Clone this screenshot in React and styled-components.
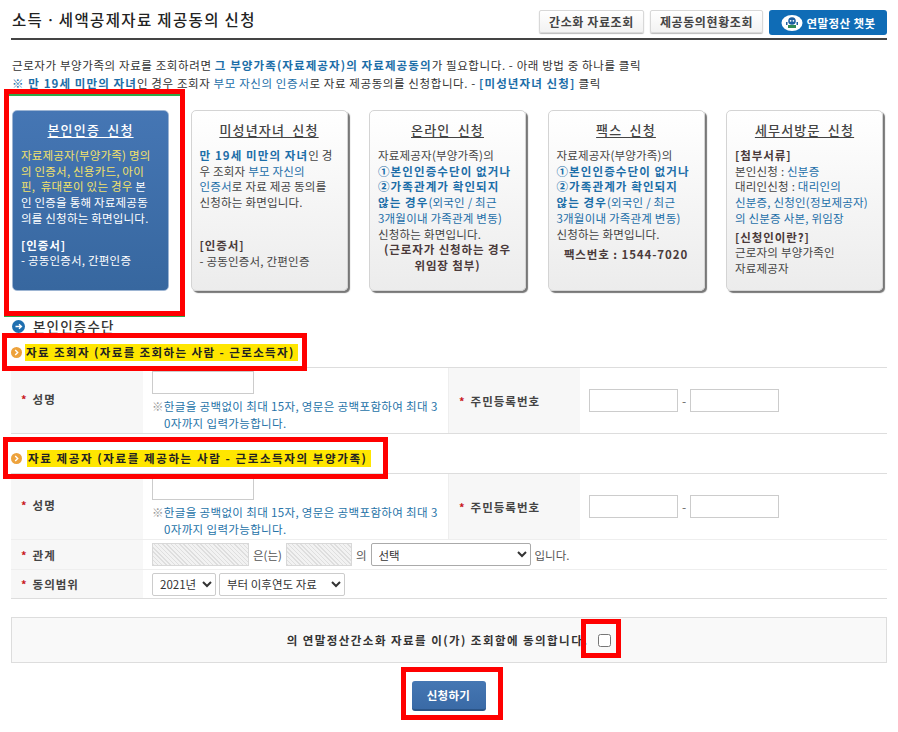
import React from "react";
import styled, { createGlobalStyle } from "styled-components";

const GlobalStyle = createGlobalStyle`
  html, body {
    margin: 0;
    padding: 0;
    background: #fff;
  }
  body {
    font-family: "Noto Sans CJK KR", "Liberation Sans", sans-serif;
    font-size: 12px;
    color: #333;
  }
  * { box-sizing: border-box; }
`;

const Page = styled.div`
  position: relative;
  width: 898px;
  height: 732px;
  padding: 10px 11px 0 11px;
  overflow: hidden;
`;

const Header = styled.div`
  display: flex;
  justify-content: space-between;
  align-items: flex-start;
  height: 30px;
  border-bottom: 2px solid #444;
`;

const Title = styled.h1`
  margin: 0;
  padding: 0 0 0 1px;
  font-size: 15.5px;
  line-height: 18px;
  font-weight: 500;
  letter-spacing: 1.35px;
  color: #222;
`;

const HeaderButtons = styled.div`
  display: flex;
  gap: 6px;
`;

const GrayButton = styled.button`
  height: 23px;
  width: ${(p) => p.$w}px;
  padding: 0;
  border: 1px solid #d8d8d8;
  border-radius: 2px;
  background: linear-gradient(#fff, #f2f2f2);
  box-shadow: 0 1px 1px #bbb;
  font: 700 12px "Noto Sans CJK KR", sans-serif;
  letter-spacing: 0.6px;
  color: #444;
`;

const BotButton = styled.button`
  display: flex;
  align-items: center;
  justify-content: center;
  gap: 4px;
  width: 118px;
  height: 25px;
  padding: 0;
  border: 0;
  border-radius: 3px;
  background: #0f6cb6;
  font: 700 11.5px "Noto Sans CJK KR", sans-serif;
  letter-spacing: 0.4px;
  color: #fff;
`;

const Intro = styled.div`
  margin-top: 16px;
  padding-left: 1px;
  font-size: 11.5px;
  line-height: 18px;
  height: 36px;
  letter-spacing: 0.6px;
  white-space: nowrap;
  color: #333;
`;

const Blue = styled.span`
  color: #1c6ea8;
  font-weight: ${(p) => (p.$bold ? 700 : 400)};
  letter-spacing: ${(p) => (p.$bold ? "1.1px" : "inherit")};
`;

const Cards = styled.div`
  display: flex;
  gap: 21.5px;
  margin-top: 18px;
  padding-left: 1px;
`;

const Card = styled.div`
  width: 157px;
  height: 181px;
  padding: 11px 8px 0 8px;
  border: 1px solid ${(p) => (p.$active ? "#9db5d3" : "#d4d4d4")};
  border-radius: 5px;
  background: ${(p) =>
    p.$active
      ? "linear-gradient(#4576b4, #37679f)"
      : "linear-gradient(#fff, #ececec)"};
  box-shadow: ${(p) => (p.$active ? "none" : "2px 2px 1px #777")};
  font-size: 11.5px;
  line-height: 15.7px;
  letter-spacing: 0.2px;
  white-space: nowrap;
  color: ${(p) => (p.$active ? "#fff" : "#444")};
`;

const CardTitle = styled.div`
  margin-bottom: 10px;
  text-align: center;
  font-size: 13px;
  line-height: 16px;
  font-weight: 500;
  letter-spacing: 1.2px;
  word-spacing: 3px;
  text-decoration: underline;
  text-underline-offset: 2px;
  color: ${(p) => (p.$active ? "#fff" : "#444")};
`;

const Yellow = styled.span`
  color: #f3e26a;
`;

const Strong = styled.div`
  margin-top: ${(p) => p.$top || 0}px;
  font-weight: 700;
  letter-spacing: 0.9px;
  text-align: ${(p) => (p.$center ? "center" : "left")};
  color: ${(p) => (p.$active ? "#fff" : "#4a3a3a")};
`;

const SectionHead = styled.div`
  display: flex;
  align-items: center;
  gap: 8px;
  height: 16px;
  margin-top: 27px;
  padding-left: 1px;
  font-size: 13.5px;
  font-weight: 500;
  letter-spacing: 1.2px;
  color: #333;
`;

const SubHead = styled.div`
  display: flex;
  align-items: center;
  gap: ${(p) => p.$gap}px;
  height: 18px;
  margin-top: ${(p) => p.$top}px;
  margin-bottom: ${(p) => p.$bottom}px;
`;

const Marker = styled.span`
  padding: 0 3px 0 1px;
  background: #ffe600;
  font-size: 11.5px;
  line-height: 17px;
  font-weight: 700;
  letter-spacing: ${(p) => p.$ls}px;
  color: #222;
`;

const Table = styled.div`
  display: grid;
  grid-template-columns: 132px 306px 131px 1fr;
  width: 876px;
  border-top: 1px solid #ddd;
  border-bottom: 1px solid #ddd;
`;

const Label = styled.div`
  display: flex;
  align-items: center;
  gap: 5px;
  height: ${(p) => p.$h}px;
  padding-left: 10px;
  padding-bottom: ${(p) => p.$pb || 0}px;
  background: #f7f7f7;
  border-top: ${(p) => (p.$line ? "1px solid #eee" : "0")};
  font-size: 11.5px;
  font-weight: 700;
  color: #444;
  letter-spacing: 1px;
`;

const Star = styled.span`
  color: #c8161d;
  font-size: 11px;
`;

const NameCell = styled.div`
  padding: 3px 0 0 9px;
  border-right: 1px solid #eee;
`;

const SmallInput = styled.input`
  display: block;
  width: ${(p) => p.$w}px;
  height: 23px;
  padding: 0;
  border: 1px solid #ccc;
  background: #fff;
`;

const Hint = styled.div`
  margin-top: 4px;
  padding-left: 12px;
  width: 292px;
  text-indent: -12px;
  font-size: 11.5px;
  line-height: 16.5px;
  letter-spacing: 0.35px;
  word-break: break-all;
  color: #2673a8;
`;

const Gray = styled.span`
  color: #999;
`;

const IdCell = styled.div`
  display: flex;
  align-items: center;
  gap: 4px;
  padding: 0 0 0 9px;
  color: #666;
`;

const WideCell = styled.div`
  grid-column: span 3;
  display: flex;
  align-items: center;
  gap: ${(p) => p.$gap || 4}px;
  padding-left: 9px;
  border-top: 1px solid #eee;
  font-size: 11.5px;
  color: #555;
`;

const Hatch = styled.div`
  width: ${(p) => p.$w}px;
  height: 23px;
  border: 1px solid #d8d8d8;
  background: repeating-linear-gradient(45deg, #dedede 0 1px, #f2f2f2 1px 3px);
`;

const Select = styled.select`
  width: ${(p) => p.$w}px;
  height: 23px;
  padding: 0 0 0 3px;
  border: 1px solid ${(p) => (p.$dark ? "#aaa" : "#ccc")};
  border-radius: 2px;
  background: #fff;
  font: 11.5px "Noto Sans CJK KR", sans-serif;
  color: #333;
`;

const Consent = styled.div`
  display: flex;
  align-items: center;
  justify-content: center;
  gap: 10px;
  width: 876px;
  height: 46px;
  margin-top: 18px;
  border: 1px solid #ddd;
  background: #f9f9f9;
  font-size: 11.5px;
  font-weight: 700;
  letter-spacing: 1.45px;
  color: #333;
`;

const Check = styled.input`
  width: 13px;
  height: 13px;
  margin: 0;
`;

const Actions = styled.div`
  display: flex;
  justify-content: center;
  margin-top: 18px;
  padding-right: 1px;
`;

const Submit = styled.button`
  width: 74px;
  height: 30px;
  padding: 0;
  border: 0;
  border-bottom: 2px solid #2b5486;
  border-radius: 3px;
  background: linear-gradient(#4577b3, #3a6aa6);
  font: 700 11.5px "Noto Sans CJK KR", sans-serif;
  letter-spacing: 0.3px;
  color: #fff;
`;

// 스크린샷 위에 덧그린 표시
const RedBox = styled.div`
  position: absolute;
  left: ${(p) => p.$x}px;
  top: ${(p) => p.$y}px;
  width: ${(p) => p.$w}px;
  height: ${(p) => p.$h}px;
  border: 5px solid #f00;
  pointer-events: none;
`;

const GreenLine = styled.div`
  position: absolute;
  left: ${(p) => p.$x}px;
  top: ${(p) => p.$y}px;
  width: ${(p) => p.$w}px;
  height: ${(p) => p.$h}px;
  background: #2eaa4a;
`;

const BlueBullet = () => (
  <svg width="13" height="13" viewBox="0 0 13 13">
    <circle cx="6.5" cy="6.5" r="6.5" fill="#1f6fb0" />
    <path d="M3.5 6.5h6M7 4.2l2.5 2.3L7 8.8" fill="none" stroke="#fff" strokeWidth="1.3" />
  </svg>
);

const OrangeBullet = () => (
  <svg width="11" height="11" viewBox="0 0 11 11">
    <circle cx="5.5" cy="5.5" r="5.5" fill="#eda23c" />
    <path d="M4.2 3l2.5 2.5L4.2 8" fill="none" stroke="#fff" strokeWidth="1.4" />
  </svg>
);

const BotIcon = () => (
  <svg width="22" height="18" viewBox="0 0 22 18">
    <ellipse cx="11" cy="9" rx="10.5" ry="8" fill="#fff" />
    <circle cx="11" cy="7" r="3.8" fill="#1c5fa0" />
    <path d="M7 11h8v3H7z" fill="#2f8a55" />
    <circle cx="9.6" cy="6.8" r="0.9" fill="#fff" />
    <circle cx="12.4" cy="6.8" r="0.9" fill="#fff" />
    <path d="M5 8h1.5v3H5zM15.5 8H17v3h-1.5z" fill="#1c5fa0" />
  </svg>
);

const NameHint = () => (
  <Hint>
    <Gray>※</Gray>한글을 공백없이 최대 15자, 영문은 공백포함하여 최대 30자까지 입력가능합니다.
  </Hint>
);

const IdInputs = () => (
  <IdCell>
    <SmallInput $w={89} />-<SmallInput $w={89} />
  </IdCell>
);

const Req = ({ children, h, pb, line }) => (
  <Label $h={h} $pb={pb} $line={line}>
    <Star>*</Star>
    {children}
  </Label>
);

const App = () => {
  return (
    <Page>
      <GlobalStyle />
      <Header>
        <Title>소득ㆍ세액공제자료 제공동의 신청</Title>
        <HeaderButtons>
          <GrayButton $w={105}>간소화 자료조회</GrayButton>
          <GrayButton $w={113}>제공동의현황조회</GrayButton>
          <BotButton>
            <BotIcon />
            연말정산 챗봇
          </BotButton>
        </HeaderButtons>
      </Header>

      <Intro>
        근로자가 부양가족의 자료를 조회하려면 <Blue $bold>그 부양가족(자료제공자)의 자료제공동의</Blue>가 필요합니다. - 아래 방법 중 하나를 클릭
        <br />
        <Blue $bold>※ 만 19세 미만의 자녀</Blue>인 경우 조회자 <Blue>부모 자신의 인증서</Blue>로 자료 제공동의를 신청합니다. - <Blue $bold>[미성년자녀 신청]</Blue> 클릭
      </Intro>

      <Cards>
        <Card $active>
          <CardTitle $active>본인인증 신청</CardTitle>
          <Yellow>
            자료제공자(부양가족) 명의
            <br />의 인증서, 신용카드, 아이
            <br />핀, &nbsp;휴대폰이 있는 경우
          </Yellow>{" "}
          본
          <br />인 인증을 통해 자료제공동
          <br />의를 신청하는 화면입니다.
          <Strong $active $top={11}>[인증서]</Strong>
          - 공동인증서, 간편인증
        </Card>
        <Card>
          <CardTitle>미성년자녀 신청</CardTitle>
          <Blue $bold>만 19세 미만의 자녀</Blue>인 경
          <br />우 조회자 <Blue>부모 자신의</Blue>
          <br /><Blue>인증서</Blue>로 자료 제공 동의를
          <br />신청하는 화면입니다.
          <Strong $top={27}>[인증서]</Strong>
          - 공동인증서, 간편인증
        </Card>
        <Card>
          <CardTitle>온라인 신청</CardTitle>
          자료제공자(부양가족)의
          <br /><Blue $bold>①본인인증수단이 없거나</Blue>
          <br /><Blue $bold>②가족관계가 확인되지</Blue>
          <br /><Blue $bold>않는 경우</Blue><Blue>(외국인 / 최근</Blue>
          <br /><Blue>3개월이내 가족관계 변동)</Blue>
          <br />신청하는 화면입니다.
          <Strong $center>(근로자가 신청하는 경우<br />위임장 첨부)</Strong>
        </Card>
        <Card>
          <CardTitle>팩스 신청</CardTitle>
          자료제공자(부양가족)의
          <br /><Blue $bold>①본인인증수단이 없거나</Blue>
          <br /><Blue $bold>②가족관계가 확인되지</Blue>
          <br /><Blue $bold>않는 경우</Blue><Blue>(외국인 / 최근</Blue>
          <br /><Blue>3개월이내 가족관계 변동)</Blue>
          <br />신청하는 화면입니다.
          <Strong $center $top={5}>팩스번호 : 1544-7020</Strong>
        </Card>
        <Card>
          <CardTitle>세무서방문 신청</CardTitle>
          <Strong>[첨부서류]</Strong>
          본인신청 : <Blue>신분증</Blue>
          <br />대리인신청 : <Blue>대리인의</Blue>
          <br /><Blue>신분증, 신청인(정보제공자)</Blue>
          <br /><Blue>의 신분증 사본, 위임장</Blue>
          <Strong $top={3}>[신청인이란?]</Strong>
          근로자의 부양가족인
          <br />자료제공자
        </Card>
      </Cards>

      <SectionHead>
        <BlueBullet />
        본인인증수단
      </SectionHead>

      <SubHead $gap={3} $top={9} $bottom={6}>
        <OrangeBullet />
        <Marker $ls={1.4}>자료 조회자 (자료를 조회하는 사람 - 근로소득자)</Marker>
      </SubHead>
      <Table>
        <Req h={65} pb={4}>성명</Req>
        <NameCell>
          <SmallInput $w={102} />
          <NameHint />
        </NameCell>
        <Req h={65}>주민등록번호</Req>
        <IdInputs />
      </Table>

      <SubHead $gap={5} $top={15} $bottom={6}>
        <OrangeBullet />
        <Marker $ls={1.6}>자료 제공자 (자료를 제공하는 사람 - 근로소득자의 부양가족)</Marker>
      </SubHead>
      <Table>
        <Req h={65} pb={4}>성명</Req>
        <NameCell>
          <SmallInput $w={102} />
          <NameHint />
        </NameCell>
        <Req h={65}>주민등록번호</Req>
        <IdInputs />

        <Req h={30} line>관계</Req>
        <WideCell>
          <Hatch $w={97} />
          은(는)
          <Hatch $w={66} />
          의
          <Select $w={160} $dark>
            <option>선택</option>
          </Select>
          입니다.
        </WideCell>

        <Req h={29} line>동의범위</Req>
        <WideCell $gap={3}>
          <Select $w={64}>
            <option>2021년</option>
          </Select>
          <Select $w={126}>
            <option>부터 이후연도 자료</option>
          </Select>
        </WideCell>
      </Table>

      <Consent>
        의 연말정산간소화 자료를 이(가) 조회함에 동의합니다.
        <Check type="checkbox" />
      </Consent>

      <Actions>
        <Submit>신청하기</Submit>
      </Actions>

      <GreenLine $x={9} $y={94} $w={171} $h={2} />
      <GreenLine $x={4} $y={316} $w={181} $h={1} />
      <RedBox $x={4} $y={89} $w={181} $h={227} />
      <RedBox $x={2} $y={333} $w={305} $h={38} />
      <RedBox $x={3} $y={437} $w={385} $h={42} />
      <RedBox $x={581} $y={619} $w={40} $h={39} />
      <RedBox $x={401} $y={667} $w={102} $h={53} />
    </Page>
  );
};

export default App;
